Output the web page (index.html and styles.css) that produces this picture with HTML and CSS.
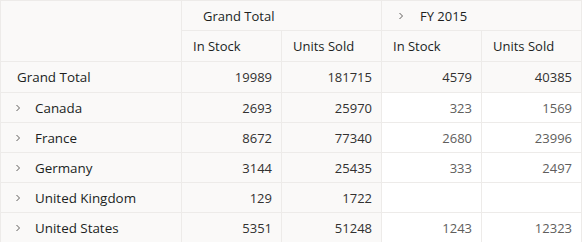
FILE: index.html
```html
<!DOCTYPE html>
<html>
<head>
<meta charset="utf-8">
<link rel="stylesheet" href="styles.css">
</head>
<body>
<div class="pivot">
  <div class="cell corner"></div>
  <div class="cell colhead span2 gt-head">Grand Total</div>
  <div class="cell colhead span2 fy-head"><svg class="chev" width="8" height="8" viewBox="0 0 8 8"><path d="M2.5 1 L5.5 4 L2.5 7" fill="none" stroke="#605e5c" stroke-width="1"/></svg><span>FY 2015</span></div>
  <div class="cell colhead measure">In Stock</div>
  <div class="cell colhead measure">Units Sold</div>
  <div class="cell colhead measure">In Stock</div>
  <div class="cell colhead measure">Units Sold</div>

  <div class="cell rowhead total-label">Grand Total</div>
  <div class="cell num sum">19989</div>
  <div class="cell num sum">181715</div>
  <div class="cell num sum">4579</div>
  <div class="cell num sum">40385</div>

  <div class="cell rowhead"><svg class="chev" width="8" height="8" viewBox="0 0 8 8"><path d="M2.5 1 L5.5 4 L2.5 7" fill="none" stroke="#605e5c" stroke-width="1"/></svg><span>Canada</span></div>
  <div class="cell num sum">2693</div>
  <div class="cell num sum">25970</div>
  <div class="cell num">323</div>
  <div class="cell num">1569</div>

  <div class="cell rowhead"><svg class="chev" width="8" height="8" viewBox="0 0 8 8"><path d="M2.5 1 L5.5 4 L2.5 7" fill="none" stroke="#605e5c" stroke-width="1"/></svg><span>France</span></div>
  <div class="cell num sum">8672</div>
  <div class="cell num sum">77340</div>
  <div class="cell num">2680</div>
  <div class="cell num">23996</div>

  <div class="cell rowhead"><svg class="chev" width="8" height="8" viewBox="0 0 8 8"><path d="M2.5 1 L5.5 4 L2.5 7" fill="none" stroke="#605e5c" stroke-width="1"/></svg><span>Germany</span></div>
  <div class="cell num sum">3144</div>
  <div class="cell num sum">25435</div>
  <div class="cell num">333</div>
  <div class="cell num">2497</div>

  <div class="cell rowhead"><svg class="chev" width="8" height="8" viewBox="0 0 8 8"><path d="M2.5 1 L5.5 4 L2.5 7" fill="none" stroke="#605e5c" stroke-width="1"/></svg><span>United Kingdom</span></div>
  <div class="cell num sum">129</div>
  <div class="cell num sum">1722</div>
  <div class="cell num"></div>
  <div class="cell num"></div>

  <div class="cell rowhead"><svg class="chev" width="8" height="8" viewBox="0 0 8 8"><path d="M2.5 1 L5.5 4 L2.5 7" fill="none" stroke="#605e5c" stroke-width="1"/></svg><span>United States</span></div>
  <div class="cell num sum">5351</div>
  <div class="cell num sum">51248</div>
  <div class="cell num">1243</div>
  <div class="cell num">12323</div>
</div>
</body>
</html>
```
FILE: styles.css
```css
html, body {
  margin: 0;
  padding: 0;
  background: #ffffff;
}
.pivot {
  display: grid;
  grid-template-columns: 181px 100px 100px 100px 100px;
  grid-template-rows: 30px 31px 31px 30px 30px 30px 30px 30px;
  width: 582px;
  box-sizing: border-box;
  border-top: 1px solid #edebe9;
  border-left: 1px solid #edebe9;
  font-family: "Open Sans", "Noto Sans", sans-serif;
  font-size: 13px;
  color: #323130;
}
.cell {
  box-sizing: border-box;
  border-right: 1px solid #edebe9;
  border-bottom: 1px solid #edebe9;
  display: flex;
  align-items: center;
  background: #ffffff;
  white-space: nowrap;
  overflow: hidden;
}
.corner {
  grid-row: span 2;
  background: #faf9f8;
}
.colhead {
  background: #faf9f8;
  color: #201f1e;
  font-weight: 500;
}
.span2 {
  grid-column: span 2;
}
.gt-head {
  padding-left: 21px;
}
.fy-head {
  padding-left: 15px;
}
.fy-head .chev {
  margin-right: 15px;
}
.measure {
  padding-left: 11px;
}
.rowhead {
  background: #faf9f8;
  color: #201f1e;
  font-weight: 500;
  padding-left: 13px;
  font-size: 13.4px;
}
.rowhead .chev {
  margin-right: 13px;
}
.total-label {
  padding-left: 16px;
}
.num {
  justify-content: flex-end;
  padding-right: 9px;
  color: #605e5c;
}
.num.sum {
  background: #faf9f8;
  color: #323130;
}
.chev {
  flex: none;
}
```
